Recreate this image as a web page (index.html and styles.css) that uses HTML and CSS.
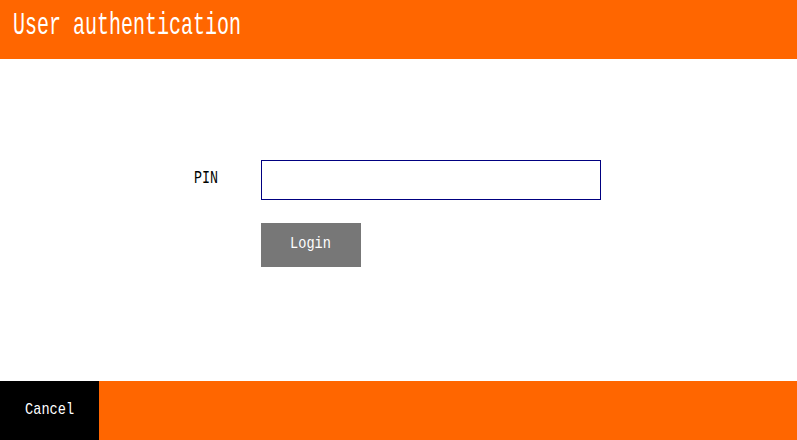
FILE: index.html
```html
<!DOCTYPE html>
<html>
<head>
<meta charset="utf-8">
<link rel="stylesheet" href="styles.css">
</head>
<body>
<div class="screen">
  <header class="header"><span class="title">User authentication</span></header>
  <main class="main">
    <form class="form">
      <label class="label" for="pin"><span class="narrow narrow-left">PIN</span></label>
      <input class="input" id="pin" type="password">
      <span></span>
      <button class="login" type="button"><span class="narrow">Login</span></button>
    </form>
  </main>
  <footer class="footer">
    <button class="cancel" type="button"><span class="narrow">Cancel</span></button>
  </footer>
</div>
</body>
</html>
```
FILE: styles.css
```css
html, body {
  margin: 0;
  padding: 0;
  background: #fff;
}
.screen {
  width: 797px;
  height: 440px;
  display: flex;
  flex-direction: column;
  font-family: "Liberation Mono", "DejaVu Sans Mono", monospace;
}
.header {
  height: 59px;
  background: #ff6600;
  color: #fff;
  font-size: 32px;
  line-height: 52px;
  padding-left: 13px;
  box-sizing: border-box;
  white-space: nowrap;
}
.title {
  display: inline-block;
  transform: scaleX(0.625);
  transform-origin: left center;
}
.narrow {
  display: inline-block;
  transform: scaleX(0.8);
  transform-origin: center center;
  white-space: nowrap;
}
.narrow-left {
  transform-origin: left center;
}
.main {
  flex: 1;
  padding-top: 101px;
  padding-left: 194px;
  box-sizing: border-box;
}
.form {
  display: grid;
  grid-template-columns: 67px 340px;
  row-gap: 23px;
  align-items: center;
}
.label {
  font-size: 18px;
  color: #000;
  line-height: 20px;
  margin-top: -5px;
}
.label .narrow {
  transform: scaleX(0.74);
}
.input {
  width: 340px;
  height: 40px;
  box-sizing: border-box;
  border: 1px solid #000080;
  margin: 0;
  padding: 0 6px;
  outline: none;
  background: #fff;
}
.login {
  width: 100px;
  height: 44px;
  background: #777777;
  color: #fff;
  border: none;
  margin: 0;
  padding: 0 0 4px;
  font-family: inherit;
  font-size: 17px;
}
.footer {
  height: 59px;
  background: #ff6600;
  display: flex;
}
.cancel {
  width: 99px;
  height: 100%;
  background: #000;
  color: #fff;
  border: none;
  margin: 0;
  padding: 0 0 2px;
  font-family: inherit;
  font-size: 17px;
}
```
